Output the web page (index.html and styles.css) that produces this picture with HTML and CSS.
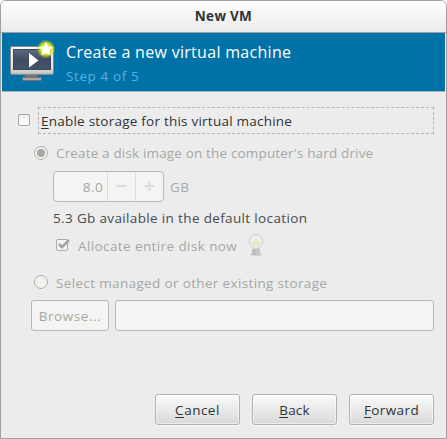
FILE: index.html
```html
<!DOCTYPE html>
<html lang="en">
<head>
<meta charset="utf-8">
<title>New VM</title>
<link rel="stylesheet" href="styles.css">
</head>
<body>
<div class="window">
  <header class="titlebar"><span class="t-window">New VM</span></header>
  <section class="banner">
    <svg class="vm-icon" width="50" height="46" viewBox="0 0 50 46">
      <defs>
        <linearGradient id="frame" x1="0" y1="0" x2="0" y2="1"><stop offset="0" stop-color="#f8f8f6"/><stop offset=".8" stop-color="#e0e0dc"/><stop offset="1" stop-color="#b8b8b4"/></linearGradient>
        <linearGradient id="screen" x1="0" y1="0" x2="0" y2="1"><stop offset="0" stop-color="#5d6a80"/><stop offset=".5" stop-color="#3f4c61"/><stop offset="1" stop-color="#465266"/></linearGradient>
        <radialGradient id="glow"><stop offset="0" stop-color="#f5f50a"/><stop offset=".6" stop-color="#e0e80c" stop-opacity=".95"/><stop offset="1" stop-color="#b5d820" stop-opacity="0"/></radialGradient>
      </defs>
      <path d="M18 34h11l2 5H16z" fill="#73777a"/>
      <rect x="14.500" y="38.500" width="19" height="3" rx="1" fill="#a8a9a6" stroke="#6e7174"/>
      <rect x="2.500" y="7.500" width="43" height="28" rx="1.500" fill="url(#frame)" stroke="#85898d"/>
      <rect x="5.500" y="10.500" width="37" height="20" fill="url(#screen)" stroke="#39455a"/>
      <path d="M21 14l9.500 7.500L21 28.500z" fill="#fff"/>
      <circle cx="38" cy="10" r="9.500" fill="url(#glow)"/>
      <path d="M38 3.500l2 4.200 4.600.5-3.400 3.200 1 4.600-4.200-2.300-4.200 2.300 1-4.600-3.400-3.200 4.600-.5z" fill="#fff" stroke="#fff" stroke-width=".6"/>
    </svg>
    <div class="headings">
      <h1 class="t-title">Create a new virtual machine</h1>
      <p class="t-step">Step 4 of 5</p>
    </div>
  </section>
  <main class="content">
    <div class="row enable">
      <span class="check"></span>
      <div class="focus"><label class="t-enable"><u>E</u>nable storage for this virtual machine</label></div>
    </div>
    <div class="row option create">
      <svg class="radio" width="16" height="16" viewBox="0 0 16 16"><circle cx="8" cy="8.600" r="7" fill="#fafaf8"/><circle cx="8" cy="8" r="6.500" fill="#f2f2ef" stroke="#a9aca4"/><circle cx="8" cy="8" r="4" fill="#a4a8a6"/></svg>
      <label class="t-create">Create a disk image on the computer's hard drive</label>
    </div>
    <div class="row size">
      <div class="spin">
        <span class="value">8.0</span>
        <span class="step"><svg width="11" height="11"><path d="M0.500 5h10" stroke="#dcdddb" stroke-width="2"/></svg></span>
        <span class="step"><svg width="11" height="11"><path d="M0.500 5h10M5.500 0v10" stroke="#dcdddb" stroke-width="2"/></svg></span>
      </div>
      <span class="t-gb">GB</span>
    </div>
    <div class="row available"><span class="t-available">5.3 Gb available in the default location</span></div>
    <div class="row allocate">
      <svg class="tick" width="16" height="16" viewBox="0 0 16 16"><rect x="1.500" y="1.500" width="11" height="11" rx="1.500" fill="#f4f4f2" stroke="#a9aca4"/><path d="M4 6l3 3.200L14 2" fill="none" stroke="#a0a4a2" stroke-width="2.600"/></svg>
      <label class="t-allocate">Allocate entire disk now</label>
      <svg class="bulb" width="16" height="23" viewBox="0 0 16 23">
        <ellipse cx="8" cy="20.500" rx="6" ry="1.300" fill="#c4c5c3"/>
        <path d="M4.500 14.500C4.500 12 1 11 1 7.500a7 7 0 0 1 14 0C15 11 11.500 12 11.500 14.500z" fill="#e9e9e5" stroke="#cccdca"/>
        <path d="M3.500 8a4.500 4.500 0 0 1 9 0" fill="none" stroke="#f6f6f2" stroke-width="2"/>
        <path d="M6.500 14L5 8M9.500 14L11 8" fill="none" stroke="#e6e2bc"/>
        <path d="M4.500 7.500l2 1.200L8 7.700l1.500 1 2-1.200" fill="none" stroke="#efe79c" stroke-width="1.500"/>
        <rect x="4" y="14.500" width="8" height="6" rx="1" fill="#d0d1cf"/>
        <path d="M4 16.500l4 .5M4 19l4 .5" stroke="#a5a7a5"/><path d="M8 16.500h4M8 19h4" stroke="#b8bab8"/>
      </svg>
    </div>
    <div class="row option select">
      <svg class="radio" width="16" height="16" viewBox="0 0 16 16"><circle cx="8" cy="8.600" r="7" fill="#fafaf8"/><circle cx="8" cy="8" r="6.500" fill="#f2f2ef" stroke="#a9aca4"/></svg>
      <label class="t-select">Select managed or other existing storage</label>
    </div>
    <div class="row path">
      <div class="browse"><span class="t-browse">Browse...</span></div>
      <div class="entry"></div>
    </div>
    <footer class="actions">
      <button class="btn"><span class="t-cancel"><u>C</u>ancel</span></button>
      <button class="btn"><span class="t-back"><u>B</u>ack</span></button>
      <button class="btn"><span class="t-forward"><u>F</u>orward</span></button>
    </footer>
  </main>
</div>
</body>
</html>
```
FILE: styles.css
```css
* { box-sizing: border-box; }
body {
  margin: 0;
  background: #fff;
  font: 13.5px/20px "Open Sans", "Noto Sans", sans-serif;
  color: #2e3436;
}
svg { display: block; flex: none; }
h1, p { margin: 0; font-weight: 400; }
span, label, h1, p { white-space: nowrap; }
u { text-decoration: underline; text-underline-offset: 2px; text-decoration-thickness: 1px; text-decoration-skip-ink: none; }
.window {
  width: 447px;
  height: 439px;
  border: 1px solid #a0a0a0;
  border-radius: 6px 6px 0 0;
  background: #ececec;
  overflow: hidden;
}
.titlebar {
  height: 32px;
  display: flex;
  justify-content: center;
  align-items: center;
  background: linear-gradient(#fff, #ebebeb);
  border-bottom: 1px solid #a0a0a0;
  font-weight: 700;
}
.t-window { letter-spacing: .3px; margin-top: -2px; }
.banner {
  height: 59px;
  margin: 0 1px;
  padding: 6px 0 0 6px;
  display: flex;
  background: #0072a8;
  border-bottom: 1px solid #a3b2b9;
}
.headings { padding: 2px 0 0 8px; }
.t-title { font-size: 16px; line-height: 22px; letter-spacing: .3px; color: #fff; }
.t-step { line-height: 22px; margin-top: 2px; letter-spacing: .6px; color: #59b0e2; }
.t-enable { letter-spacing: .23px; }
.t-create { letter-spacing: .16px; }
.t-available, .t-select { letter-spacing: .35px; }
.t-browse { letter-spacing: .55px; }
.t-cancel { letter-spacing: .5px; }
.t-back { letter-spacing: .2px; }
.t-forward { letter-spacing: .4px; }
.content { padding: 15px 12px 0 17px; }
.row { display: flex; align-items: center; color: #a5a8a6; }
.enable { height: 27px; color: #2e3436; }
.check {
  width: 12px;
  height: 12px;
  margin: -1px 8px 0 0;
  border: 1px solid #a5a79d;
  border-radius: 2px;
  background: linear-gradient(#ededed, #fff);
  box-shadow: 0 1px #fafafa;
}
.focus {
  flex: 1;
  height: 27px;
  padding: 3px 0 0 2px;
  border: 1px dashed #b5b5b5;
}
.focus label { display: block; }
.option { padding-left: 15px; }
.radio { margin: -1px 7px 0 0; }
.create .radio { margin-top: 1px; }
.create { height: 27px; margin-top: 5px; }
.size { height: 31px; margin: 5px 0 0 35px; }
.spin {
  width: 111px;
  height: 31px;
  display: flex;
  border: 1px solid #b6b9b4;
  border-radius: 4px;
  background: #f4f4f2;
}
.value { width: 53px; padding: 5px 4px 0 0; text-align: right; letter-spacing: .4px; }
.step { width: 28px; display: flex; align-items: center; justify-content: center; border-left: 1px solid #dcdddb; }
.t-gb { margin-left: 6px; letter-spacing: .4px; }
.available { height: 20px; margin: 6px 0 0 35px; color: #464b4d; }
.allocate { height: 23px; margin: 6px 0 0 36px; }
.tick { margin: 1px 0 0 1px; }
.t-allocate { width: 162px; margin-left: 7px; letter-spacing: .4px; }
.bulb { margin-left: 8px; }
.select { height: 23px; margin-top: 14px; }
.path { height: 31px; margin: 6px 0 0 13px; gap: 6px; }
.browse, .entry { height: 31px; border: 1px solid #b4b8b6; border-radius: 3px; background: #f4f4f2; }
.browse { width: 78px; display: flex; justify-content: center; align-items: center; }
.entry { flex: 1; }
.actions { display: flex; justify-content: flex-end; gap: 12px; margin-top: 63px; }
.btn {
  width: 85px;
  height: 31px;
  padding: 0;
  border: 1px solid #b2b2b2;
  border-radius: 3px;
  background: linear-gradient(#fafafa, #d9d9d9);
  box-shadow: inset 0 0 0 1px rgba(255,255,255,.5), 0 1px #f7f7f7;
  font: inherit;
  color: inherit;
}
```
